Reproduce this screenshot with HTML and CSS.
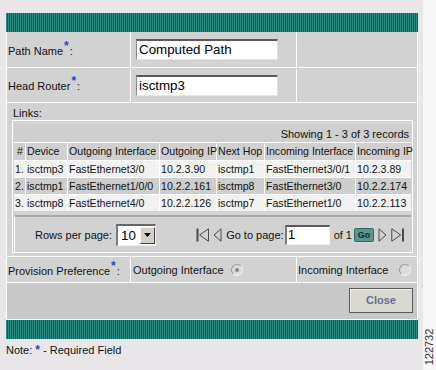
FILE: index.html
```html
<!DOCTYPE html>
<html>
<head>
<meta charset="utf-8">
<link rel="stylesheet" href="styles.css">
</head>
<body>
<div class="screen">
  <div class="panel">
    <div class="banner"></div>
    <div class="body">
      <div class="grid-row row-path">
        <div class="cell label">Path Name <span class="req">*</span>:</div>
        <div class="cell field"><div class="textbox">Computed Path</div></div>
        <div class="cell"></div>
      </div>
      <div class="grid-row row-head">
        <div class="cell label">Head Router <span class="req">*</span>:</div>
        <div class="cell field"><div class="textbox">isctmp3</div></div>
        <div class="cell"></div>
      </div>
      <div class="links">
        <div class="links-label">Links:</div>
        <div class="links-box">
          <table class="grid">
            <colgroup>
              <col class="c-num"><col class="c-dev"><col class="c-oi"><col class="c-oip"><col class="c-nh"><col class="c-ii"><col class="c-iip">
            </colgroup>
            <thead>
              <tr class="showing"><td colspan="7">Showing 1 - 3 of 3 records</td></tr>
              <tr class="head">
                <th>#</th><th>Device</th><th>Outgoing Interface</th><th>Outgoing IP</th><th>Next Hop</th><th>Incoming Interface</th><th>Incoming IP</th>
              </tr>
            </thead>
            <tbody>
              <tr class="light"><td>1.</td><td>isctmp3</td><td>FastEthernet3/0</td><td>10.2.3.90</td><td>isctmp1</td><td>FastEthernet3/0/1</td><td>10.2.3.89</td></tr>
              <tr class="dark"><td>2.</td><td>isctmp1</td><td>FastEthernet1/0/0</td><td>10.2.2.161</td><td>isctmp8</td><td>FastEthernet3/0</td><td>10.2.2.174</td></tr>
              <tr class="light"><td>3.</td><td>isctmp8</td><td>FastEthernet4/0</td><td>10.2.2.126</td><td>isctmp7</td><td>FastEthernet1/0</td><td>10.2.2.113</td></tr>
            </tbody>
          </table>
          <div class="pager">
            <div class="rows-per-page">
              <span>Rows per page:</span>
              <div class="select"><span class="select-val">10</span><span class="select-btn"><svg width="8" height="5" viewBox="0 0 8 5"><path d="M0 0h7L3.5 4z" fill="#000"/></svg></span></div>
            </div>
            <div class="nav">
              <svg class="ico ico-first" width="14" height="14" viewBox="0 0 14 14"><path d="M1.5 0.5v13" stroke="#4a4a4a" stroke-width="2" fill="none"/><path d="M12.5 0.8L3.6 7L12.5 13.2Z" stroke="#4a4a4a" fill="none"/></svg>
              <svg class="ico ico-prev" width="9" height="14" viewBox="0 0 9 14"><path d="M8 0.8L1 7L8 13.2Z" stroke="#4a4a4a" fill="none"/></svg>
              <span class="goto">Go to page:</span>
              <div class="page-input">1</div>
              <span class="of">of 1</span>
              <span class="go">Go</span>
              <svg class="ico ico-next" width="9" height="14" viewBox="0 0 9 14"><path d="M1 0.8L8 7L1 13.2Z" stroke="#4a4a4a" fill="none"/></svg>
              <svg class="ico ico-last" width="14" height="14" viewBox="0 0 14 14"><path d="M0.8 0.8L9.6 7L0.8 13.2Z" stroke="#4a4a4a" fill="none"/><path d="M12 0.5v13" stroke="#4a4a4a" stroke-width="2" fill="none"/></svg>
            </div>
          </div>
        </div>
      </div>
      <div class="grid-row row-prov">
        <div class="cell label">Provision Preference <span class="req">*</span>:</div>
        <div class="cell opt opt-out">Outgoing Interface <span class="radio checked"></span></div>
        <div class="cell opt opt-in">Incoming Interface <span class="radio"></span></div>
      </div>
      <div class="actions"><div class="close-btn">Close</div></div>
    </div>
    <div class="banner"></div>
  </div>
  <div class="note">Note: <span class="req-note">*</span> - Required Field</div>
  <div class="figid">122732</div>
</div>
</body>
</html>
```

FILE: styles.css
```css
* { box-sizing: border-box; }
html, body { margin: 0; padding: 0; }
body {
  background: #f7f6f7;
  font-family: "Liberation Sans", Arial, sans-serif;
  font-size: 11px;
  color: #111;
}
.screen {
  position: relative;
  width: 423px;
  height: 370px;
  background: #e9e6e9;
  padding: 13px 0 0 6px;
}
.panel { width: 412px; }
.banner {
  height: 19px;
  background: repeating-linear-gradient(90deg, #2c8b82 0 1px, #0f5f58 1px 2px);
}
.body {
  display: flex;
  flex-direction: column;
  gap: 1px;
  background: #fff;
  border: 1px solid #fff;
  border-top: 0;
}
.grid-row {
  display: grid;
  grid-template-columns: 123px 165px 120px;
  gap: 1px;
}
.row-path { height: 35px; }
.row-head { height: 34px; }
.row-prov { height: 25px; }
.cell {
  background: #d2d2d2;
  display: flex;
  align-items: center;
}
.label { padding: 2px 0 0 1px; }
.req {
  color: #2a44b8;
  font-weight: bold;
  font-size: 12px;
  position: relative;
  top: -5px;
  margin: 0 1px 0 1px;
}
.field { padding-left: 5px; }
.textbox {
  width: 142px;
  height: 21px;
  background: #fff;
  border-top: 2px solid #5a5a5a;
  border-left: 1px solid #8c8c8c;
  border-right: 1px solid #dedede;
  border-bottom: 1px solid #e6e6e6;
  font-size: 13.33px;
  line-height: 17px;
  padding-left: 2px;
  color: #000;
}
.links {
  background: #d2d2d2;
  height: 153px;
  padding: 3px 4px 3px 5px;
}
.links-label { height: 14px; line-height: 14px; padding-left: 1px; }
.links-box {
  border: 1px solid #fff;
  padding: 4px 1px 0 1px;
  height: 133px;
}
.grid {
  border-collapse: separate;
  border-spacing: 0;
  width: 397px;
  table-layout: fixed;
  font-size: 10.6px;
}
.c-num { width: 11px; }
.c-dev { width: 42px; }
.c-oi { width: 92px; }
.c-oip { width: 57px; }
.c-nh { width: 48px; }
.c-ii { width: 91px; }
.c-iip { width: 56px; }
.grid td, .grid th {
  padding: 0 0 0 1px;
  white-space: nowrap;
  overflow: visible;
  font-weight: normal;
  text-align: left;
  height: 17px;
  line-height: 16px;
  border-top: 1px solid #fff;
  border-left: 1px solid #fff;
}
.grid td:first-child, .grid th:first-child { border-left: 0; padding-left: 1px; }
.grid .showing td {
  background: #cfcfcf;
  border-top: 0;
  text-align: right;
  padding-right: 2px;
  height: 17px;
  font-size: 11px;
}
.grid .head th { background: #d0d0d0; height: 18px; line-height: 17px; }
.grid .head th:first-child { padding-left: 3px; }
.grid tr.light td { background: #f1f1f1; }
.grid tr.dark td { background: #cdcdcd; }
.pager {
  margin-top: 4px;
  height: 37px;
  border-top: 2px solid #a8a8a8;
  border-left: 1px solid #fff;
  display: flex;
  align-items: center;
  justify-content: space-between;
  padding: 0 6px 0 20px;
}
.rows-per-page { display: flex; align-items: center; gap: 4px; }
.select {
  width: 40px;
  height: 22px;
  display: flex;
  align-items: center;
  background: #fff;
  border-top: 2px solid #666;
  border-left: 2px solid #7a7a7a;
  border-right: 1px solid #f0f0f0;
  border-bottom: 1px solid #f0f0f0;
}
.select-val { font-size: 13.33px; padding-left: 3px; width: 22px; color: #000; }
.select-btn {
  width: 15px;
  height: 17px;
  background: #d4d0c8;
  border-top: 1px solid #f4f4f4;
  border-left: 1px solid #f4f4f4;
  border-right: 1px solid #404040;
  border-bottom: 1px solid #404040;
  display: flex;
  align-items: center;
  justify-content: center;
}
.nav { display: flex; align-items: center; }
.ico { display: block; }
.ico-prev { margin-left: 3px; }
.goto { margin-left: 4px; }
.page-input {
  margin-left: 1px;
  width: 45px;
  height: 20px;
  background: #fff;
  border-top: 2px solid #5a5a5a;
  border-left: 2px solid #7a7a7a;
  border-right: 1px solid #eee;
  border-bottom: 1px solid #eee;
  font-size: 13.33px;
  line-height: 16px;
  padding-left: 1px;
  color: #000;
}
.of { margin-left: 4px; }
.go {
  margin-left: 2px;
  width: 20px;
  height: 14px;
  background: #5a9590;
  border: 1px solid #2f6a65;
  border-radius: 2px;
  color: #0c2f2b;
  font-weight: bold;
  font-size: 9px;
  line-height: 12px;
  text-align: center;
}
.ico-next { margin-left: 4px; }
.ico-last { margin-left: 4px; }
.opt { padding-left: 2px; }
.opt-in { padding-left: 1px; }
.radio {
  display: inline-block;
  width: 12px;
  height: 12px;
  border-radius: 50%;
  border: 1px solid;
  border-color: #9a9a9a #f2f2f2 #f2f2f2 #9a9a9a;
  background: #dcdcdc;
  position: relative;
}
.opt-out .radio { margin-left: 7px; }
.opt-in .radio { margin-left: 10px; }
.radio.checked::after {
  content: "";
  position: absolute;
  left: 3px;
  top: 3px;
  width: 4px;
  height: 4px;
  border-radius: 50%;
  background: #8a8a8a;
}
.actions {
  background: #c8c8c8;
  height: 36px;
  display: flex;
  justify-content: flex-end;
  align-items: flex-start;
  padding: 5px 4px 0 0;
}
.close-btn {
  width: 64px;
  height: 25px;
  background: #d9d9d2;
  border: 1px solid #5a5a5a;
  box-shadow: inset 1px 1px 0 #f0f0ea;
  color: #6a6a98;
  font-weight: bold;
  font-size: 11px;
  line-height: 23px;
  text-align: center;
}
.note { margin-top: 4px; line-height: 14px; }
.req-note { color: #2a44b8; font-weight: bold; font-size: 12px; }
.figid {
  position: absolute;
  left: 410px;
  top: 341px;
  width: 38px;
  height: 12px;
  line-height: 12px;
  font-size: 11px;
  color: #333;
  transform: rotate(-90deg);
  transform-origin: center;
  text-align: center;
}
```
